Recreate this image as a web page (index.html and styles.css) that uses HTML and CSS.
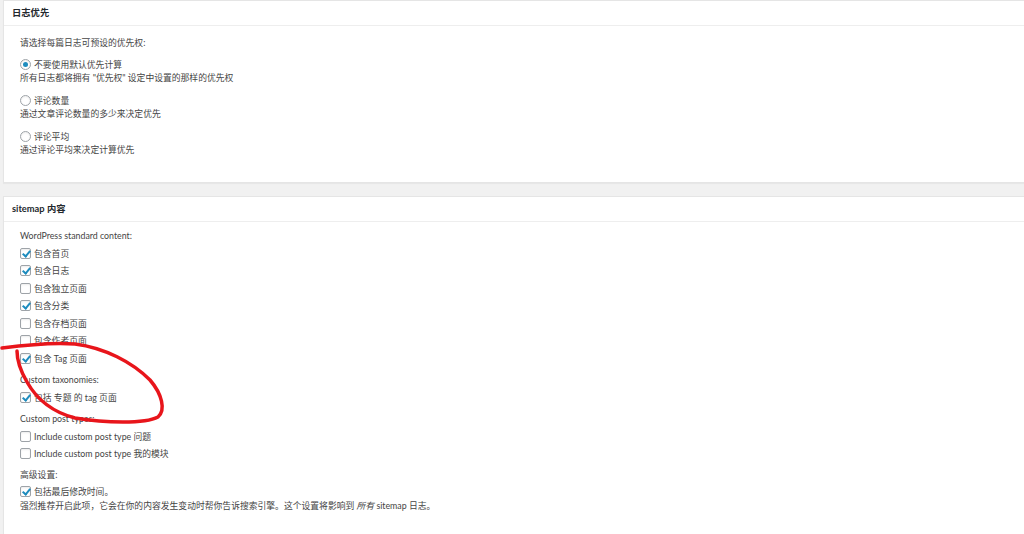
FILE: index.html
```html
<!DOCTYPE html>
<html lang="zh">
<head>
<meta charset="utf-8">
<title>设置</title>
<link rel="stylesheet" href="styles.css">
</head>
<body>
<div class="wrap">
  <section class="box box-priority">
    <h3 class="box-head">日志优先</h3>
    <div class="box-body">
      <p class="intro">请选择每篇日志可预设的优先权:</p>
      <div class="option">
        <div class="row"><span class="radio checked"></span><span class="lbl">不要使用默认优先计算</span></div>
        <div class="desc">所有日志都将拥有 "优先权" 设定中设置的那样的优先权</div>
      </div>
      <div class="option">
        <div class="row"><span class="radio"></span><span class="lbl">评论数量</span></div>
        <div class="desc">通过文章评论数量的多少来决定优先</div>
      </div>
      <div class="option">
        <div class="row"><span class="radio"></span><span class="lbl">评论平均</span></div>
        <div class="desc">通过评论平均来决定计算优先</div>
      </div>
    </div>
  </section>

  <section class="box box-content">
    <h3 class="box-head">sitemap 内容</h3>
    <div class="box-body">
      <div class="group-title first">WordPress standard content:</div>
      <div class="row cb-row"><span class="check on"></span><span class="lbl">包含首页</span></div>
      <div class="row cb-row"><span class="check on"></span><span class="lbl">包含日志</span></div>
      <div class="row cb-row"><span class="check"></span><span class="lbl">包含独立页面</span></div>
      <div class="row cb-row"><span class="check on"></span><span class="lbl">包含分类</span></div>
      <div class="row cb-row"><span class="check"></span><span class="lbl">包含存档页面</span></div>
      <div class="row cb-row"><span class="check"></span><span class="lbl">包含作者页面</span></div>
      <div class="row cb-row"><span class="check on"></span><span class="lbl">包含 Tag 页面</span></div>

      <div class="group-title g-tax">Custom taxonomies:</div>
      <div class="row cb-row"><span class="check on"></span><span class="lbl">包括 专题 的 tag 页面</span></div>

      <div class="group-title g-types">Custom post types:</div>
      <div class="row cb-row"><span class="check"></span><span class="lbl">Include custom post type 问题</span></div>
      <div class="row cb-row"><span class="check"></span><span class="lbl">Include custom post type 我的模块</span></div>

      <div class="group-title g-adv">高级设置:</div>
      <div class="row cb-row"><span class="check on"></span><span class="lbl">包括最后修改时间。</span></div>
      <div class="desc desc-tight">强烈推荐开启此项，它会在你的内容发生变动时帮你告诉搜索引擎。这个设置将影响到 <i>所有</i> sitemap 日志。</div>
    </div>
  </section>
</div>

<svg class="scribble" width="1024" height="534" viewBox="0 0 1024 534" aria-hidden="true">
  <path d="M2 348 C 25 345, 50 342, 75 344 C 105 348, 132 362, 150 380 C 162 394, 166 410, 158 417 C 145 424, 105 423, 75 418 C 52 412, 36 398, 27 382 C 20 370, 17 360, 17 351" />
</svg>
</body>
</html>
```
FILE: styles.css
```css
html, body {
  margin: 0;
  padding: 0;
  background: #f1f1f1;
  overflow: hidden;
  width: 1024px;
  height: 534px;
}

body {
  position: relative;
  font-family: "Lato", "Noto Sans CJK SC", sans-serif;
  font-size: 8.8px;
  color: #444;
}

.wrap {
  box-sizing: border-box;
  padding-left: 3px;
  width: 1024px;
  height: 534px;
  display: flex;
  flex-direction: column;
  overflow: hidden;
}

.box {
  background: #fff;
  border: 1px solid #e5e5e5;
  border-right: none;
  box-shadow: 0 1px 1px rgba(0,0,0,0.04);
}

.box-content {
  margin-top: 13px;
  flex: 1;
  min-height: 0;
  border-bottom: none;
  overflow: hidden;
}

.box-head {
  margin: 0;
  height: 24px;
  line-height: 24px;
  padding-left: 8px;
  font-size: 9.3px;
  font-weight: 700;
  color: #23282d;
  border-bottom: 1px solid #eee;
}

.box-body {
  padding: 10px 0 26px 16px;
}

.box-content .box-body {
  padding-top: 5px;
  padding-bottom: 0;
}

.intro {
  margin: 0;
  line-height: 13px;
}

.option {
  margin-top: 9px;
}

.option + .option {
  margin-top: 10px;
}

.row {
  display: flex;
  align-items: center;
  height: 13px;
  line-height: 13px;
}

.desc {
  line-height: 13px;
}

.desc-tight {
  margin-top: -2px;
}

.cb-row {
  height: 17.5px;
  line-height: 17.5px;
}

.group-title {
  height: 17.5px;
  line-height: 17.5px;
  margin-top: 4px;
}

.group-title.first {
  margin-top: 0;
}

.group-title.g-adv {
  margin-top: 3px;
}

.lbl {
  margin-left: 3px;
}

.radio {
  width: 9px;
  height: 9px;
  border: 1px solid #9ea3a8;
  border-radius: 50%;
  background: #fff;
  box-shadow: inset 0 1px 2px rgba(0,0,0,0.08);
  display: flex;
  align-items: center;
  justify-content: center;
  flex: none;
}

.radio.checked::after {
  content: "";
  width: 5px;
  height: 5px;
  border-radius: 50%;
  background: #1e8cbe;
}

.check {
  position: relative;
  width: 9px;
  height: 9px;
  border: 1px solid #9ea3a8;
  border-radius: 2px;
  background: #fff;
  box-shadow: inset 0 1px 2px rgba(0,0,0,0.08);
  flex: none;
}

.check.on::after {
  content: "";
  position: absolute;
  left: 3px;
  top: 0px;
  width: 3px;
  height: 6px;
  border-right: 2px solid #1e8cbe;
  border-bottom: 2px solid #1e8cbe;
  transform: rotate(40deg);
}

.scribble {
  position: absolute;
  left: 0;
  top: 0;
  pointer-events: none;
}

.scribble path {
  fill: none;
  stroke: #e8151b;
  stroke-width: 3.5;
  stroke-linecap: round;
  stroke-linejoin: round;
}
```
